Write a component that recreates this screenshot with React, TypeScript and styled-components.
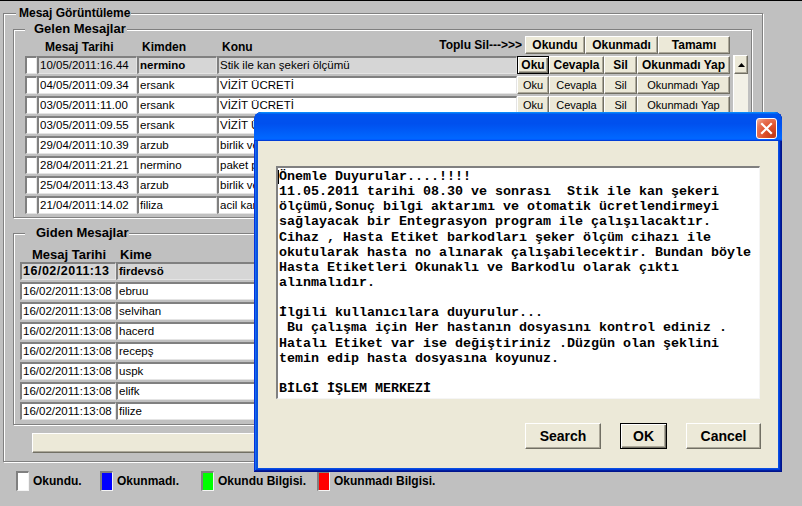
import React from "react";
import styled, { createGlobalStyle, css } from "styled-components";

const GlobalStyle = createGlobalStyle`
  html, body {
    margin: 0;
    padding: 0;
    background: #c0c0c0;
  }
  body {
    font-family: "Liberation Sans", Arial, sans-serif;
    color: #000;
  }
  * {
    box-sizing: border-box;
  }
`;

const Screen = styled.div`
  position: relative;
  width: 802px;
  height: 506px;
  overflow: hidden;
  background: #c0c0c0;
  border-top: 1px solid #000;
  padding: 12px 0 0 3px;
`;

/* etched frame with a caption, like a Delphi TGroupBox */
const Group = styled.div<{ $w: number; $h: number }>`
  position: relative;
  width: ${(p) => p.$w}px;
  height: ${(p) => p.$h}px;
  border: 1px solid #808080;
  box-shadow: inset 1px 1px 0 #fff, 1px 1px 0 #fff;
`;

const GroupTitle = styled.span<{ $left: number; $pad: number; $size: number }>`
  position: absolute;
  top: -8px;
  left: ${(p) => p.$left}px;
  padding: 0 1px 0 ${(p) => p.$pad}px;
  background: #c0c0c0;
  font-weight: bold;
  font-size: ${(p) => p.$size}px;
  line-height: 14px;
  white-space: nowrap;
`;

const OuterBody = styled.div`
  display: flex;
  flex-direction: column;
  gap: 15px;
  padding: 15px 0 0 9px;
`;

const GelenBody = styled.div`
  display: flex;
  flex-direction: column;
  padding: 6px 0 0 11px;
`;

const GidenBody = styled.div`
  display: flex;
  flex-direction: column;
  padding: 10px 0 0 6px;
`;

const HeaderRow = styled.div`
  display: flex;
  align-items: center;
  width: 705px;
  height: 18px;
`;

const Spacer = styled.div<{ $w: number }>`
  width: ${(p) => p.$w}px;
  flex: none;
`;

const HeadLabel = styled.div<{ $w?: number; $pad: number; $size?: number }>`
  ${(p) =>
    p.$w
      ? css`
          width: ${p.$w}px;
          flex: none;
        `
      : css`
          flex: 1;
        `}
  align-self: flex-end;
  padding-left: ${(p) => p.$pad}px;
  font-weight: bold;
  font-size: ${(p) => p.$size ?? 12}px;
  line-height: 14px;
  white-space: nowrap;
`;

const TopluLabel = styled.div`
  margin-right: 3px;
  font-weight: bold;
  font-size: 12px;
  line-height: 14px;
  white-space: nowrap;
`;

const Btn = styled.button<{ $w: number; $h?: number; $bold?: boolean; $size?: number; $focused?: boolean }>`
  width: ${(p) => p.$w}px;
  height: ${(p) => p.$h ?? 18}px;
  flex: none;
  padding: 0;
  margin: 0;
  background: #ece9d8;
  font-family: "Liberation Sans", Arial, sans-serif;
  font-weight: ${(p) => (p.$bold ? "bold" : "normal")};
  font-size: ${(p) => p.$size ?? 11}px;
  color: #000;
  white-space: nowrap;
  border: 1px solid;
  ${(p) =>
    p.$focused
      ? css`
          border-color: #000;
          box-shadow: inset 1px 1px #fff, inset -1px -1px #716f64, inset -2px -2px #aca899;
        `
      : css`
          border-color: #fff #716f64 #716f64 #fff;
          box-shadow: inset -1px -1px #aca899;
        `}
`;

const TableArea = styled.div`
  display: flex;
  gap: 3px;
  margin-top: 2px;
`;

const RowList = styled.div`
  display: flex;
  flex-direction: column;
  gap: 2px;
`;

const Row = styled.div`
  display: flex;
  height: 18px;
`;

const Cell = styled.div<{ $w: number; $hl?: boolean; $bold?: boolean; $size?: number; $spacing?: number }>`
  width: ${(p) => p.$w}px;
  height: 18px;
  flex: none;
  background: ${(p) => (p.$hl ? "#d6d6d6" : "#fff")};
  border-style: solid;
  border-width: 2px 1px 1px 2px;
  border-color: #808080 #e4e4e4 #e4e4e4 #808080;
  padding-left: 1px;
  font-size: ${(p) => p.$size ?? 11.5}px;
  font-weight: ${(p) => (p.$bold ? "bold" : "normal")};
  letter-spacing: ${(p) => p.$spacing ?? 0}px;
  line-height: 14px;
  white-space: nowrap;
  overflow: hidden;
`;

const ScrollBar = styled.div`
  width: 15px;
  margin-top: -1px;
  display: flex;
  flex-direction: column;
  background: #f3f1e7;
  border-left: 1px solid #fff;
`;

const ScrollButton = styled.div`
  height: 19px;
  flex: none;
  display: flex;
  align-items: center;
  justify-content: center;
  background: #ece9d8;
  border: 1px solid;
  border-color: #fff #716f64 #716f64 #fff;
  box-shadow: inset -1px -1px #aca899;
`;

const BottomBar = styled.div`
  width: 600px;
  height: 20px;
  margin: -7px 0 0 19px;
  background: #ece9d8;
  border: 1px solid;
  border-color: #fff #716f64 #716f64 #fff;
  box-shadow: inset -1px -1px #aca899;
`;

const Legend = styled.div`
  display: flex;
  align-items: center;
  margin: 9px 0 0 13px;
`;

const LegendItem = styled.div<{ $w?: number }>`
  display: flex;
  align-items: center;
  gap: 4px;
  ${(p) => p.$w && `width: ${p.$w}px;`}
  flex: none;
  font-weight: bold;
  font-size: 12px;
`;

const Swatch = styled.div<{ $color: string }>`
  width: 13px;
  height: 20px;
  background: ${(p) => p.$color};
  border-style: solid;
  border-width: 2px 1px 1px 2px;
  border-color: #808080 #f4f4f4 #f4f4f4 #808080;
`;

/* XP message window floating over the form */
const Window = styled.div`
  position: absolute;
  left: 254px;
  top: 111px;
  width: 528px;
  height: 360px;
  display: flex;
  flex-direction: column;
  padding: 0 4px 4px;
  border-radius: 8px 8px 0 0;
  background: #0a4fe0;
  box-shadow: inset -1px -1px #00138c, inset 1px 1px #0831d9, inset -2px -2px #001ea0,
    inset 2px 2px #166aee, inset -3px -3px #003bda, inset 3px 3px #0855dd;
`;

const TitleBar = styled.div`
  height: 29px;
  margin: 0 -4px;
  padding: 6px 5px 0 0;
  display: flex;
  justify-content: flex-end;
  align-items: flex-start;
  border-radius: 8px 8px 0 0;
  background: linear-gradient(
    180deg,
    #0997ff,
    #0053ee 8%,
    #0050ee 40%,
    #06f 88%,
    #06f 93%,
    #005bff 95%,
    #003dd7 96%,
    #003dd7
  );
`;

const CloseButton = styled.button`
  width: 21px;
  height: 21px;
  padding: 0;
  display: flex;
  align-items: center;
  justify-content: center;
  border: 1px solid #fff;
  border-radius: 3px;
  background: radial-gradient(circle at 85% 85%, #c13a17 0%, #e0532f 45%, #e8785a 75%, #f4b8a4 100%);
`;

const WindowBody = styled.div`
  flex: 1;
  display: flex;
  flex-direction: column;
  background: #ece9d8;
  padding: 25px 18px 0;
`;

const Memo = styled.div`
  height: 233px;
  background: #fff;
  border-style: solid;
  border-width: 2px 1px 1px 2px;
  border-color: #808080 #f5f5f5 #f5f5f5 #808080;
  padding: 1px 0 0 1px;
  font-family: "Liberation Mono", "DejaVu Sans Mono", monospace;
  font-weight: bold;
  font-size: 13.33px;
  overflow: hidden;
`;

const MemoLine = styled.div`
  position: relative;
  height: 15.15px;
  line-height: 15px;
  white-space: pre;
`;

const Caret = styled.span`
  position: absolute;
  left: -1px;
  top: 1px;
  width: 1px;
  height: 14px;
  background: #000;
`;

const DialogButtons = styled.div`
  display: flex;
  justify-content: flex-end;
  gap: 19px;
  margin: 24px -1px 0 0;
`;

const gelen = [
  { date: "10/05/2011:16.44", from: "nermino", subject: "Stik ile kan şekeri ölçümü" },
  { date: "04/05/2011:09.34", from: "ersank", subject: "VİZİT ÜCRETİ" },
  { date: "03/05/2011:11.00", from: "ersank", subject: "VİZİT ÜCRETİ" },
  { date: "03/05/2011:09.55", from: "ersank", subject: "VİZİT ÜCRETİ" },
  { date: "29/04/2011:10.39", from: "arzub", subject: "birlik ve beraberlik" },
  { date: "28/04/2011:21.21", from: "nermino", subject: "paket program" },
  { date: "25/04/2011:13.43", from: "arzub", subject: "birlik ve beraberlik" },
  { date: "21/04/2011:14.02", from: "filiza", subject: "acil kardiyoloji" },
];

const giden = ["firdevsö", "ebruu", "selvihan", "hacerd", "recepş", "uspk", "elifk", "filize"];

const message = [
  "Önemle Duyurular....!!!!",
  "11.05.2011 tarihi 08.30 ve sonrası  Stik ile kan şekeri",
  "ölçümü,Sonuç bilgi aktarımı ve otomatik ücretlendirmeyi",
  "sağlayacak bir Entegrasyon program ile çalışılacaktır.",
  "Cihaz , Hasta Etiket barkodları şeker ölçüm cihazı ile",
  "okutularak hasta no alınarak çalışabilecektir. Bundan böyle",
  "Hasta Etiketleri Okunaklı ve Barkodlu olarak çıktı",
  "alınmalıdır.",
  "",
  "İlgili kullanıcılara duyurulur...",
  " Bu çalışma için Her hastanın dosyasını kontrol ediniz .",
  "Hatalı Etiket var ise değiştiriniz .Düzgün olan şeklini",
  "temin edip hasta dosyasına koyunuz.",
  "",
  "BİLGİ İŞLEM MERKEZİ",
];

export default function App() {
  return (
    <>
      <GlobalStyle />
      <Screen>
        <Group $w={760} $h={449}>
          <GroupTitle $left={12} $pad={3} $size={12}>
            Mesaj Görüntüleme
          </GroupTitle>
          <OuterBody>
            <Group $w={739} $h={189}>
              <GroupTitle $left={11} $pad={9} $size={13}>
                Gelen Mesajlar
              </GroupTitle>
              <GelenBody>
                <HeaderRow>
                  <Spacer $w={12} />
                  <HeadLabel $w={100} $pad={8}>
                    Mesaj Tarihi
                  </HeadLabel>
                  <HeadLabel $w={80} $pad={5}>
                    Kimden
                  </HeadLabel>
                  <HeadLabel $pad={5}>Konu</HeadLabel>
                  <TopluLabel>Toplu Sil---&gt;&gt;&gt;</TopluLabel>
                  <Btn $w={60} $bold $size={12}>
                    Okundu
                  </Btn>
                  <Btn $w={73} $bold $size={12}>
                    Okunmadı
                  </Btn>
                  <Btn $w={72} $bold $size={12}>
                    Tamamı
                  </Btn>
                </HeaderRow>
                <TableArea>
                  <RowList>
                    {gelen.map((m, i) => {
                      const hl = i === 0;
                      const size = hl ? 12 : 11;
                      return (
                        <Row key={i}>
                          <Cell $w={12} />
                          <Cell $w={100} $hl={hl}>
                            {m.date}
                          </Cell>
                          <Cell $w={80} $hl={hl} $bold={hl}>
                            {m.from}
                          </Cell>
                          <Cell $w={300} $hl={hl}>
                            {m.subject}
                          </Cell>
                          <Btn $w={32} $bold={hl} $size={size} $focused={hl}>
                            Oku
                          </Btn>
                          <Btn $w={55} $bold={hl} $size={size}>
                            Cevapla
                          </Btn>
                          <Btn $w={33} $bold={hl} $size={size}>
                            Sil
                          </Btn>
                          <Btn $w={93} $bold={hl} $size={size}>
                            Okunmadı Yap
                          </Btn>
                        </Row>
                      );
                    })}
                  </RowList>
                  <ScrollBar>
                    <ScrollButton>
                      <svg width="7" height="4" viewBox="0 0 7 4">
                        <path d="M3.5 0 L7 4 L0 4 Z" fill="#000" />
                      </svg>
                    </ScrollButton>
                  </ScrollBar>
                </TableArea>
              </GelenBody>
            </Group>

            <Group $w={739} $h={192}>
              <GroupTitle $left={11} $pad={11} $size={13}>
                Giden Mesajlar
              </GroupTitle>
              <GidenBody>
                <HeaderRow>
                  <HeadLabel $w={96} $pad={12} $size={13}>
                    Mesaj Tarihi
                  </HeadLabel>
                  <HeadLabel $w={100} $pad={4} $size={13}>
                    Kime
                  </HeadLabel>
                </HeaderRow>
                <RowList>
                  {giden.map((to, i) => {
                    const hl = i === 0;
                    return (
                      <Row key={i}>
                        <Cell $w={96} $hl={hl} $bold={hl} $size={hl ? 12.5 : 11.5} $spacing={hl ? 0.5 : 0}>
                          {hl ? "16/02/2011:13" : "16/02/2011:13:08"}
                        </Cell>
                        <Cell $w={320} $hl={hl} $bold={hl}>
                          {to}
                        </Cell>
                      </Row>
                    );
                  })}
                </RowList>
              </GidenBody>
            </Group>

            <BottomBar />
          </OuterBody>
        </Group>

        <Legend>
          <LegendItem $w={84}>
            <Swatch $color="#ffffff" />
            Okundu.
          </LegendItem>
          <LegendItem $w={101}>
            <Swatch $color="#0000ff" />
            Okunmadı.
          </LegendItem>
          <LegendItem $w={116}>
            <Swatch $color="#00ff00" />
            Okundu Bilgisi.
          </LegendItem>
          <LegendItem>
            <Swatch $color="#ff0000" />
            Okunmadı Bilgisi.
          </LegendItem>
        </Legend>

        <Window>
          <TitleBar>
            <CloseButton aria-label="Kapat">
              <svg width="13" height="13" viewBox="0 0 13 13">
                <path d="M2 2 L11 11 M11 2 L2 11" stroke="#fff" strokeWidth="2.2" strokeLinecap="square" />
              </svg>
            </CloseButton>
          </TitleBar>
          <WindowBody>
            <Memo>
              {message.map((line, i) => (
                <MemoLine key={i}>
                  {i === 0 && <Caret />}
                  {line}
                </MemoLine>
              ))}
            </Memo>
            <DialogButtons>
              <Btn $w={76} $h={26} $bold $size={14}>
                Search
              </Btn>
              <Btn $w={47} $h={26} $bold $size={14} $focused>
                OK
              </Btn>
              <Btn $w={75} $h={26} $bold $size={14}>
                Cancel
              </Btn>
            </DialogButtons>
          </WindowBody>
        </Window>
      </Screen>
    </>
  );
}
